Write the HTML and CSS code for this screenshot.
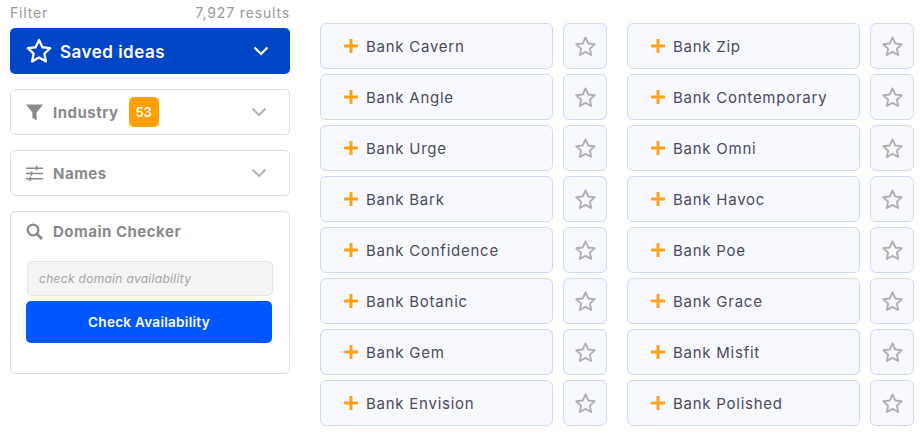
FILE: index.html
```html
<!DOCTYPE html>
<html lang="en">
<head>
  <meta charset="UTF-8" />
  <meta name="viewport" content="width=device-width, initial-scale=1" />
  <title>Bank name ideas</title>
  <link rel="stylesheet" href="styles.css">
</head>
<body>
  <svg class="svg-defs" width="0" height="0" aria-hidden="true">
    <symbol id="star" viewBox="0 0 24 24">
      <path d="M12 2.6l2.9 6.2 6.7.8-5 4.6 1.3 6.7-5.9-3.3-5.9 3.3 1.3-6.7-5-4.6 6.7-.8z" fill="none" stroke="currentColor" stroke-width="2" stroke-linejoin="round"/>
    </symbol>
    <symbol id="chevron" viewBox="0 0 16 10">
      <path d="M1.5 1.5L8 8l6.5-6.5" fill="none" stroke="currentColor" stroke-width="2.2"/>
    </symbol>
    <symbol id="plus" viewBox="0 0 14 14">
      <path d="M7 0v14M0 7h14" fill="none" stroke="currentColor" stroke-width="3"/>
    </symbol>
  </svg>

  <div class="page">
    <aside class="sidebar">
      <div class="filter-head">
        <span>Filter</span>
        <span>7,927 results</span>
      </div>

      <button class="saved-btn">
        <svg class="saved-star"><use href="#star"/></svg>
        <span class="saved-label">Saved ideas</span>
        <svg class="chevron"><use href="#chevron"/></svg>
      </button>

      <div class="panel">
        <svg class="panel-icon" viewBox="0 0 16 16"><path d="M0 .5h16L10 8v7.5L6 13V8z" fill="currentColor"/></svg>
        <span class="panel-title">Industry</span>
        <span class="badge">53</span>
        <svg class="chevron"><use href="#chevron"/></svg>
      </div>

      <div class="panel">
        <svg class="panel-icon" viewBox="0 0 16 16"><path d="M0 3h16M0 8h16M0 13h16M10 1v4M5 6v4M4 11v4" fill="none" stroke="currentColor" stroke-width="1.5"/></svg>
        <span class="panel-title">Names</span>
        <svg class="chevron"><use href="#chevron"/></svg>
      </div>

      <div class="domain-box">
        <div class="domain-title">
          <svg class="panel-icon" viewBox="0 0 16 16"><circle cx="6.6" cy="6.6" r="5" fill="none" stroke="currentColor" stroke-width="2.2"/><path d="M10.4 10.4L15 15" stroke="currentColor" stroke-width="2.8"/></svg>
          <span class="panel-title">Domain Checker</span>
        </div>
        <input class="domain-input" type="text" placeholder="check domain availability">
        <button class="check-btn">Check Availability</button>
      </div>
    </aside>

    <main class="names">
      <div class="name-row"><button class="name-btn"><svg class="plus"><use href="#plus"/></svg>Bank Cavern</button><button class="star-btn"><svg><use href="#star"/></svg></button></div>
      <div class="name-row"><button class="name-btn"><svg class="plus"><use href="#plus"/></svg>Bank Zip</button><button class="star-btn"><svg><use href="#star"/></svg></button></div>
      <div class="name-row"><button class="name-btn"><svg class="plus"><use href="#plus"/></svg>Bank Angle</button><button class="star-btn"><svg><use href="#star"/></svg></button></div>
      <div class="name-row"><button class="name-btn"><svg class="plus"><use href="#plus"/></svg>Bank Contemporary</button><button class="star-btn"><svg><use href="#star"/></svg></button></div>
      <div class="name-row"><button class="name-btn"><svg class="plus"><use href="#plus"/></svg>Bank Urge</button><button class="star-btn"><svg><use href="#star"/></svg></button></div>
      <div class="name-row"><button class="name-btn"><svg class="plus"><use href="#plus"/></svg>Bank Omni</button><button class="star-btn"><svg><use href="#star"/></svg></button></div>
      <div class="name-row"><button class="name-btn"><svg class="plus"><use href="#plus"/></svg>Bank Bark</button><button class="star-btn"><svg><use href="#star"/></svg></button></div>
      <div class="name-row"><button class="name-btn"><svg class="plus"><use href="#plus"/></svg>Bank Havoc</button><button class="star-btn"><svg><use href="#star"/></svg></button></div>
      <div class="name-row"><button class="name-btn"><svg class="plus"><use href="#plus"/></svg>Bank Confidence</button><button class="star-btn"><svg><use href="#star"/></svg></button></div>
      <div class="name-row"><button class="name-btn"><svg class="plus"><use href="#plus"/></svg>Bank Poe</button><button class="star-btn"><svg><use href="#star"/></svg></button></div>
      <div class="name-row"><button class="name-btn"><svg class="plus"><use href="#plus"/></svg>Bank Botanic</button><button class="star-btn"><svg><use href="#star"/></svg></button></div>
      <div class="name-row"><button class="name-btn"><svg class="plus"><use href="#plus"/></svg>Bank Grace</button><button class="star-btn"><svg><use href="#star"/></svg></button></div>
      <div class="name-row"><button class="name-btn"><svg class="plus"><use href="#plus"/></svg>Bank Gem</button><button class="star-btn"><svg><use href="#star"/></svg></button></div>
      <div class="name-row"><button class="name-btn"><svg class="plus"><use href="#plus"/></svg>Bank Misfit</button><button class="star-btn"><svg><use href="#star"/></svg></button></div>
      <div class="name-row"><button class="name-btn"><svg class="plus"><use href="#plus"/></svg>Bank Envision</button><button class="star-btn"><svg><use href="#star"/></svg></button></div>
      <div class="name-row"><button class="name-btn"><svg class="plus"><use href="#plus"/></svg>Bank Polished</button><button class="star-btn"><svg><use href="#star"/></svg></button></div>
    </main>
  </div>
</body>
</html>
```

FILE: styles.css
```css
* {
  box-sizing: border-box;
}

html, body {
  height: 434px;
  overflow: hidden;
}

body {
  margin: 0;
  background: white;
  font-family: 'Inter', 'Liberation Sans', sans-serif;
}

button {
  font-family: inherit;
  cursor: pointer;
}

.svg-defs {
  display: block;
  height: 0;
}

.page {
  display: flex;
  align-items: flex-start;
  padding-left: 10px;
}

.sidebar {
  width: 280px;
  flex-shrink: 0;
  padding-top: 4px;
}

.filter-head {
  display: flex;
  justify-content: space-between;
  height: 24px;
  font-size: 14px;
  line-height: 17px;
  letter-spacing: 0.85px;
  color: #999;
}

.saved-btn {
  display: flex;
  align-items: center;
  width: 100%;
  height: 46px;
  padding: 0 12px 0 15px;
  border: none;
  border-radius: 5px;
  background: #0046c7;
  color: white;
  font-size: 17px;
  font-weight: 600;
  letter-spacing: 0.5px;
}

.saved-star {
  width: 28px;
  height: 28px;
  margin-right: 7px;
}

.saved-label {
  flex: 1;
  padding-top: 2px;
  text-align: left;
}

.chevron {
  width: 16px;
  height: 10px;
  margin-right: 9px;
}

.panel {
  display: flex;
  align-items: center;
  height: 46px;
  margin-top: 15px;
  padding: 0 14px 0 15px;
  border: 1px solid #ddd;
  border-radius: 5px;
  color: #8a8a8a;
}

.panel .chevron {
  margin-left: auto;
  margin-right: 8px;
  color: #b5b5b5;
}

.panel-icon {
  width: 17px;
  height: 17px;
  margin-right: 10px;
  color: #8a8a8a;
  flex-shrink: 0;
}

.panel-title {
  font-size: 15px;
  font-weight: 700;
  letter-spacing: 0.5px;
  color: #8a8a8a;
}

.badge {
  width: 30px;
  height: 30px;
  margin-left: 10px;
  border-radius: 5px;
  background: #ffa000;
  color: white;
  font-size: 13px;
  font-weight: 600;
  line-height: 30px;
  text-align: center;
}

.domain-box {
  height: 163px;
  margin-top: 15px;
  padding: 10px 16px 0 15px;
  border: 1px solid #ddd;
  border-radius: 5px;
}

.domain-title {
  display: flex;
  align-items: center;
  height: 18px;
  margin-bottom: 21px;
}

.domain-input {
  display: block;
  width: 246px;
  height: 35px;
  margin-left: 1px;
  padding: 0 11px;
  border: 1px solid #e4e4e4;
  border-radius: 5px;
  background: #f4f4f4;
  font-family: inherit;
  font-size: 12px;
  font-style: italic;
  letter-spacing: 0.3px;
}

.domain-input::placeholder {
  color: #a3a3a3;
}

.check-btn {
  display: block;
  width: 246px;
  height: 42px;
  margin-top: 5px;
  border: none;
  border-radius: 5px;
  background: #0056ff;
  color: white;
  font-size: 13.5px;
  font-weight: 600;
  letter-spacing: 0.3px;
}

.names {
  display: grid;
  grid-template-columns: 287px 287px;
  column-gap: 20px;
  row-gap: 5px;
  margin-left: 30px;
  padding-top: 23px;
}

.name-row {
  display: flex;
  gap: 10px;
}

.name-btn {
  display: flex;
  align-items: center;
  width: 233px;
  height: 46px;
  padding: 0 0 0 23px;
  border: 1px solid #cfd8fb;
  border-radius: 6px;
  background: #f8f9ff;
  color: #4a4a5a;
  font-size: 15px;
  letter-spacing: 0.75px;
  text-align: left;
}

.plus {
  width: 14px;
  height: 14px;
  margin-right: 8px;
  color: #ffa11c;
}

.star-btn {
  display: flex;
  align-items: center;
  justify-content: center;
  width: 44px;
  height: 46px;
  padding: 0;
  border: 1px solid #cfd8fb;
  border-radius: 6px;
  background: #f8f9ff;
  color: #b0b0b0;
}

.star-btn svg {
  width: 23px;
  height: 23px;
}
```
